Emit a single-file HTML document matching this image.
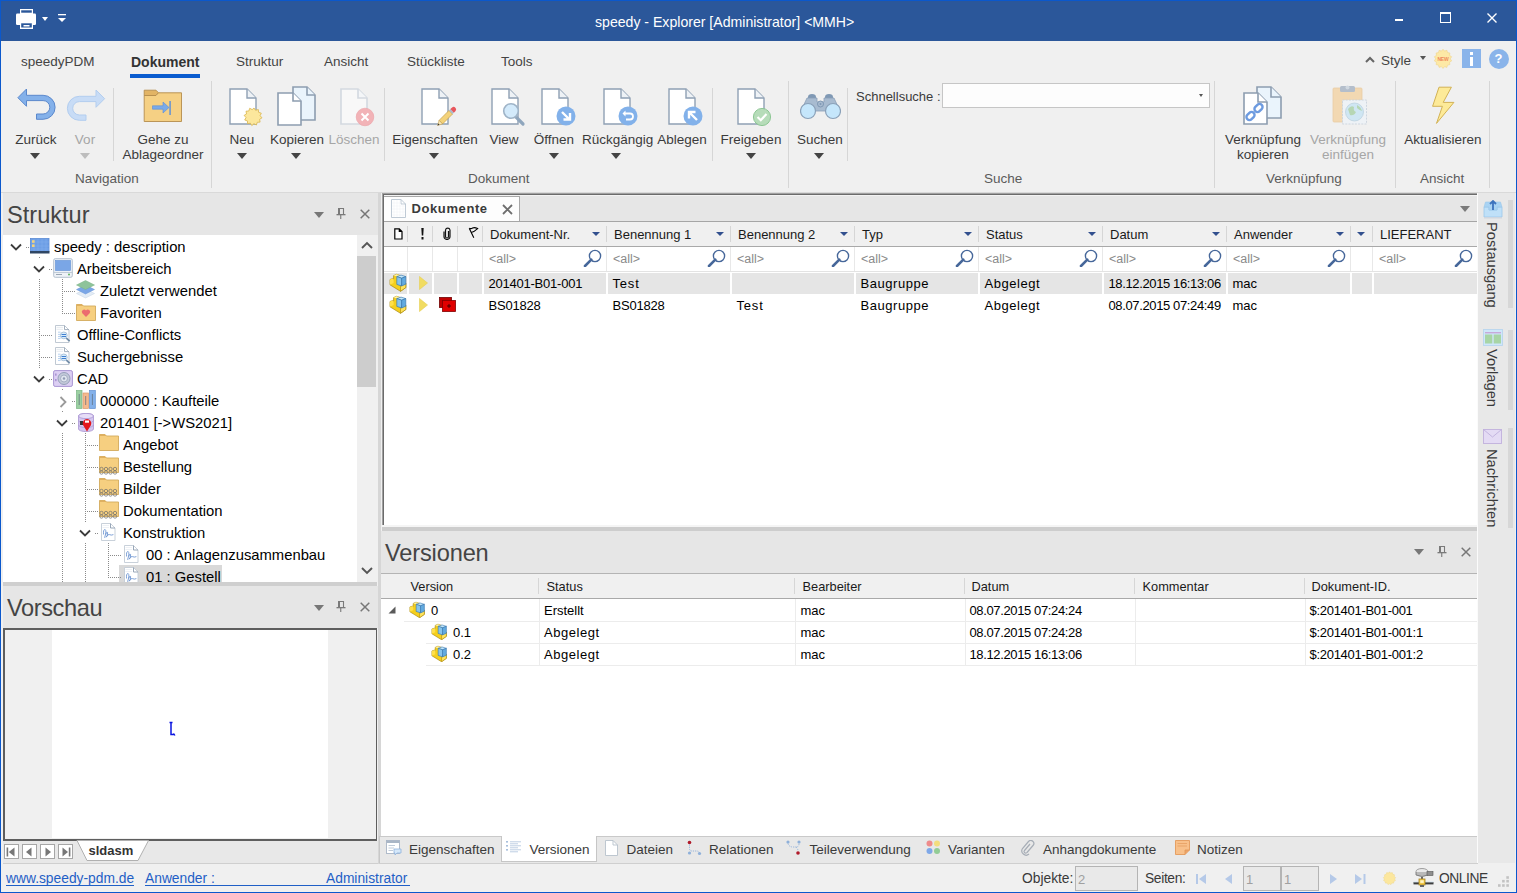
<!DOCTYPE html>
<html><head><meta charset="utf-8">
<style>
*{box-sizing:border-box;margin:0;padding:0}
html,body{width:1517px;height:893px;overflow:hidden;background:#f0f0f0;font-family:"Liberation Sans",sans-serif;color:#333;position:relative}
.a{position:absolute;white-space:nowrap}
.t{position:absolute;white-space:nowrap;line-height:1}
#border{position:absolute;left:0;top:0;width:1517px;height:893px;border:1px solid #0b58cc;pointer-events:none;z-index:50}
#title{position:absolute;left:0;top:0;width:1517px;height:41px;background:#2b579a;z-index:2}
.rl{position:absolute;font-size:13.5px;color:#3b3b3b;text-align:center;line-height:15px;white-space:nowrap}
.rl.dis{color:#a6a6a6}
.dd{position:absolute;width:0;height:0;border-left:5px solid transparent;border-right:5px solid transparent;border-top:6px solid #444}
.dd.dis{border-top-color:#bdbdbd}
.sep{position:absolute;width:1px;background:#d6d6d6}
.gl{position:absolute;font-size:13.5px;color:#5b5b5b;white-space:nowrap;line-height:15px}
.ph{position:absolute;background:#e6e6e6}
.pht{position:absolute;font-size:23.6px;color:#444;line-height:1;white-space:nowrap}
.tr{position:absolute;font-size:14.8px;color:#000;line-height:22px;white-space:nowrap}
.g{position:absolute;font-size:13px;color:#000;line-height:1;white-space:nowrap}
</style></head><body>
<div id="title">
  <!-- printer icon -->
  <svg class="a" style="left:16px;top:8px" width="21" height="22" viewBox="0 0 21 22">
    <rect x="4" y="1" width="13" height="5" fill="#fff"/>
    <rect x="5.2" y="2.3" width="10.6" height="2.4" fill="#2b579a"/>
    <rect x="0" y="5.5" width="20" height="11.5" rx="1.2" fill="#fff"/>
    <rect x="4" y="14.5" width="13" height="6.5" fill="#fff"/>
    <rect x="5.2" y="15.3" width="10.6" height="4.2" fill="#2b579a"/>
    <rect x="7.5" y="17" width="6" height="1.5" fill="#fff"/>
  </svg>
  <div class="dd" style="left:42px;top:17px;border-top-color:#fff;border-left-width:3.5px;border-right-width:3.5px;border-top-width:4px"></div>
  <svg class="a" style="left:58px;top:14px" width="8" height="9" viewBox="0 0 8 9"><rect x="0" y="0" width="8" height="1.3" fill="#fff"/><path d="M0 4 L8 4 L4 8 Z" fill="#fff"/></svg>
  <div class="t" style="left:595px;top:15px;font-size:14.1px;color:#fff">speedy - Explorer [Administrator] &lt;MMH&gt;</div>
  <!-- window controls -->
  <div class="a" style="left:1395px;top:19px;width:8px;height:2px;background:#fff"></div>
  <div class="a" style="left:1440px;top:12px;width:11px;height:11px;border:1.4px solid #fff;border-top-width:2px"></div>
  <svg class="a" style="left:1487px;top:13px" width="10" height="10" viewBox="0 0 10 10"><path d="M0.5 0.5 L9.5 9.5 M9.5 0.5 L0.5 9.5" stroke="#fff" stroke-width="1.4"/></svg>
</div>

<!-- RIBBON -->
<div id="ribbon" class="a" style="left:1px;top:40px;width:1515px;height:153px;background:#f0f0f0;border-bottom:1px solid #d9d9d9"></div>
<div class="t" style="left:21px;top:55px;font-size:13.5px;color:#444">speedyPDM</div>
<div class="t" style="left:131px;top:55px;font-size:14px;font-weight:bold;color:#333">Dokument</div>
<div class="a" style="left:130px;top:74px;width:70px;height:3.6px;background:#0a5ccf"></div>
<div class="t" style="left:236px;top:55px;font-size:13.5px;color:#444">Struktur</div>
<div class="t" style="left:324px;top:55px;font-size:13.5px;color:#444">Ansicht</div>
<div class="t" style="left:407px;top:55px;font-size:13.5px;color:#444">Stückliste</div>
<div class="t" style="left:501px;top:55px;font-size:13.5px;color:#444">Tools</div>


<svg width="0" height="0" style="position:absolute">
 <defs>
  <g id="doc"><path d="M1 1 H18 L27 10 V36 H1 Z" fill="#fff" stroke="#8fa0b4" stroke-width="1.4" stroke-linejoin="miter"/><path d="M18 1 V10 H27" fill="#eef2f6" stroke="#8fa0b4" stroke-width="1.4"/></g>
  <g id="docdis"><path d="M1 1 H18 L27 10 V36 H1 Z" fill="#f8f8f8" stroke="#d3d9e0" stroke-width="1.6"/><path d="M18 1 V10 H27" fill="#f4f6f8" stroke="#d3d9e0" stroke-width="1.6"/></g>
 </defs>
</svg>
<!-- Zurück -->
<svg class="a" style="left:17px;top:88px" width="40" height="34" viewBox="0 0 40 34">
 <path d="M0.9 9.7 L9.5 1 V7.3 H26.1 A12 12 0 0 1 26.1 31.3 H19.5 V26 H26.1 A6.7 6.7 0 0 0 26.1 12.6 H9.5 V18.3 Z" fill="#84b1ea" stroke="#5b88cc" stroke-width="1"/>
</svg>
<div class="rl" style="left:0px;top:132px;width:72px">Zurück</div>
<div class="dd" style="left:30px;top:153px"></div>
<!-- Vor -->
<svg class="a" style="left:66px;top:89px" width="40" height="34" viewBox="0 0 40 34">
 <path d="M38.6 9.7 L30 1 V7.3 H13.4 A12 12 0 0 0 13.4 31.3 H20 V26 H13.4 A6.7 6.7 0 0 1 13.4 12.6 H30 V18.3 Z" fill="#c8dcf6" stroke="#b2cdef" stroke-width="1"/>
</svg>
<div class="rl dis" style="left:65px;top:132px;width:40px">Vor</div>
<div class="dd dis" style="left:80px;top:153px"></div>
<div class="sep" style="left:113px;top:88px;height:73px"></div>
<!-- Gehe zu -->
<svg class="a" style="left:143px;top:89px" width="40" height="34" viewBox="0 0 40 34">
 <path d="M1.2 1.2 H13 L15.5 3.8 L13 6.5 H1.2 Z" fill="#e2b465" stroke="#b48c4c" stroke-width="0.9"/>
 <path d="M1.2 6.5 H13 L15.5 3.8 H38.5 V32.5 H1.2 Z" fill="#f5d084" stroke="#b48c4c" stroke-width="0.9"/>
 <path d="M9.5 16.8 H20 V13 L26 18.5 L20 24 V20.2 H9.5 Z" fill="#7aaae8" stroke="#5b8cd6" stroke-width="0.6"/>
 <rect x="26.2" y="12" width="1.8" height="14" fill="#7a9cc8"/>
</svg>
<div class="rl" style="left:113px;top:132px;width:100px">Gehe zu<br>Ablageordner</div>
<div class="gl" style="left:75px;top:171px">Navigation</div>
<div class="sep" style="left:211px;top:81px;height:107px"></div>
<!-- Neu -->
<svg class="a" style="left:229px;top:88px" width="36" height="40" viewBox="0 0 36 40"><use href="#doc"/>
 <path d="M25 20 l1.6 2.3 2.7-0.8 0.3 2.8 2.7 0.9 -1.2 2.5 1.9 2.1 -2.4 1.5 0.5 2.8 -2.8 0.2 -0.9 2.7 -2.5-1.3 -2.1 1.9 -1.4-2.4 -2.8 0.5 -0.2-2.8 -2.7-0.9 1.3-2.5 -1.9-2.1 2.4-1.4 -0.5-2.8 2.8-0.2 0.9-2.7 2.5 1.3 Z" fill="#fce79c" stroke="#d9b54e" stroke-width="0.8"/>
</svg>
<div class="rl" style="left:222px;top:132px;width:40px">Neu</div>
<div class="dd" style="left:237px;top:153px"></div>
<!-- Kopieren -->
<svg class="a" style="left:277px;top:86px" width="42" height="40" viewBox="0 0 42 40">
 <path d="M16 1 H30 L38 9 V34 H16 Z" fill="#eaf4fc" stroke="#8d9db0" stroke-width="1.6"/><path d="M30 1 V9 H38" fill="#eaf4fc" stroke="#8d9db0" stroke-width="1.6"/>
 <path d="M1 7 H16 L24 15 V39 H1 Z" fill="#fff" stroke="#8d9db0" stroke-width="1.6"/><path d="M16 7 V15 H24" fill="#fff" stroke="#8d9db0" stroke-width="1.6"/>
</svg>
<div class="rl" style="left:267px;top:132px;width:60px">Kopieren</div>
<div class="dd" style="left:291px;top:153px"></div>
<!-- Löschen -->
<svg class="a" style="left:340px;top:88px" width="36" height="40" viewBox="0 0 36 40"><use href="#docdis"/>
 <circle cx="25" cy="29" r="8.8" fill="#f2b3b7" stroke="#eba0a5" stroke-width="0.6"/>
 <path d="M21.5 25.5 L28.5 32.5 M28.5 25.5 L21.5 32.5" stroke="#fff" stroke-width="2"/>
</svg>
<div class="rl dis" style="left:324px;top:132px;width:60px">Löschen</div>
<div class="sep" style="left:384px;top:88px;height:73px"></div>
<!-- Eigenschaften -->
<svg class="a" style="left:421px;top:88px" width="36" height="40" viewBox="0 0 36 40"><use href="#doc"/>
 <path d="M21.6 35.94 L18.06 32.4 L27.96 22.5 L31.5 26.04 Z" fill="#f3d27a" stroke="#c29c48" stroke-width="0.7"/>
 <path d="M18.06 32.4 L21.6 35.94 L16.6 37.4 Z" fill="#f7e6b8" stroke="#c29c48" stroke-width="0.6"/>
 <path d="M17.3 35.4 L18.6 36.7 L16.6 37.4 Z" fill="#333"/>
 <path d="M27.96 22.5 L31.5 26.04 L32.91 24.63 L29.37 21.09 Z" fill="#a9b9cc"/>
 <path d="M29.37 21.09 L32.91 24.63 L34.6 22.9 A2.5 2.5 0 0 0 31.1 19.4 Z" fill="#e8565c"/>
</svg>
<div class="rl" style="left:385px;top:132px;width:100px">Eigenschaften</div>
<div class="dd" style="left:429px;top:153px"></div>
<!-- View -->
<svg class="a" style="left:491px;top:88px" width="36" height="40" viewBox="0 0 36 40"><use href="#doc"/>
 <path d="M24 28 L32 36" stroke="#8fa6bd" stroke-width="3.2" stroke-linecap="round"/>
 <circle cx="20" cy="23" r="7.3" fill="#d3eafb" stroke="#9fb4c8" stroke-width="1.6"/>
</svg>
<div class="rl" style="left:484px;top:132px;width:40px">View</div>
<!-- Öffnen -->
<svg class="a" style="left:541px;top:88px" width="36" height="40" viewBox="0 0 36 40"><use href="#doc"/>
 <circle cx="25" cy="28" r="9.5" fill="#82b1ea"/>
 <path d="M21 24 L28 31 M29 25 V31.5 H22.5" stroke="#fff" stroke-width="2.4" fill="none"/>
</svg>
<div class="rl" style="left:524px;top:132px;width:60px">Öffnen</div>
<div class="dd" style="left:549px;top:153px"></div>
<!-- Rückgängig -->
<svg class="a" style="left:603px;top:88px" width="36" height="40" viewBox="0 0 36 40"><use href="#doc"/>
 <circle cx="25" cy="28" r="9.5" fill="#82b1ea"/>
 <path d="M22 25.5 H27 A3 3 0 0 1 27 31.5 H23" stroke="#fff" stroke-width="1.8" fill="none"/>
 <path d="M19.5 25.5 L22.5 22.5 V28.5 Z" fill="#fff"/>
</svg>
<div class="rl" style="left:582px;top:132px;width:70px">Rückgängig</div>
<div class="dd" style="left:611px;top:153px"></div>
<!-- Ablegen -->
<svg class="a" style="left:668px;top:88px" width="36" height="40" viewBox="0 0 36 40"><use href="#doc"/>
 <circle cx="25" cy="28" r="9.5" fill="#82b1ea"/>
 <path d="M22 25 L29 32 M21 30.5 V24 H27.5" stroke="#fff" stroke-width="2.4" fill="none"/>
</svg>
<div class="rl" style="left:652px;top:132px;width:60px">Ablegen</div>
<div class="sep" style="left:712px;top:88px;height:73px"></div>
<!-- Freigeben -->
<svg class="a" style="left:737px;top:88px" width="36" height="40" viewBox="0 0 36 40"><use href="#doc"/>
 <circle cx="25" cy="29" r="8.6" fill="#b6dcb9" stroke="#86c38d" stroke-width="0.9"/>
 <path d="M20.5 29 L23.8 32.2 L29.5 26" stroke="#fff" stroke-width="2.2" fill="none"/>
</svg>
<div class="rl" style="left:716px;top:132px;width:70px">Freigeben</div>
<div class="dd" style="left:746px;top:153px"></div>
<div class="sep" style="left:788px;top:81px;height:107px"></div>
<div class="gl" style="left:468px;top:171px">Dokument</div>
<!-- Suchen binoculars -->
<svg class="a" style="left:800px;top:92px" width="41" height="28" viewBox="0 0 41 28">
 <path d="M8 5 A4 3 0 0 1 16 5 V7 H8 Z M25 5 A4 3 0 0 1 33 5 V7 H25 Z" fill="#7f98b4"/>
 <path d="M7 6 H17 V10 H24 V6 H34 L40 19 H1 Z" fill="#a8bbd0" stroke="#8aa0b8" stroke-width="0.8"/>
 <circle cx="20.5" cy="12" r="3" fill="#a8bbd0" stroke="#7f98b4" stroke-width="1"/>
 <circle cx="20.5" cy="12" r="1" fill="#7f98b4"/>
 <circle cx="8" cy="19" r="7.5" fill="#c5e6fb" stroke="#8aa0b8" stroke-width="1.2"/>
 <circle cx="33" cy="19" r="7.5" fill="#c5e6fb" stroke="#8aa0b8" stroke-width="1.2"/>
</svg>
<div class="rl" style="left:790px;top:132px;width:60px">Suchen</div>
<div class="dd" style="left:814px;top:153px"></div>
<div class="sep" style="left:847px;top:88px;height:73px"></div>
<!-- Schnellsuche -->
<div class="t" style="left:856px;top:90px;font-size:13px;color:#3b3b3b">Schnellsuche :</div>
<div class="a" style="left:942px;top:83px;width:268px;height:25px;background:#fdfdfd;border:1px solid #c6c6c6"></div>
<div class="dd" style="left:1199px;top:94px;border-left-width:2.5px;border-right-width:2.5px;border-top-width:3px;border-top-color:#555"></div>
<div class="gl" style="left:984px;top:171px">Suche</div>
<div class="sep" style="left:1214px;top:81px;height:107px"></div>
<!-- Verknüpfung kopieren -->
<svg class="a" style="left:1243px;top:86px" width="40" height="40" viewBox="0 0 40 40">
 <path d="M14 1 H28 L38 11 V32 H14 Z" fill="#eaf4fc" stroke="#8d9db0" stroke-width="1.6"/><path d="M28 1 V11 H38" fill="#eaf4fc" stroke="#8d9db0" stroke-width="1.6"/>
 <path d="M1 7 H15 L24 16 V38 H1 Z" fill="#fff" stroke="#8d9db0" stroke-width="1.6"/><path d="M15 7 V16 H24" fill="#fff" stroke="#8d9db0" stroke-width="1.6"/>
 <g fill="none" stroke="#6d9be0" stroke-width="2.4"><rect x="3" y="27" width="9" height="6" rx="3" transform="rotate(-45 7.5 30)"/><rect x="11" y="19" width="9" height="6" rx="3" transform="rotate(-45 15.5 22)"/></g>
</svg>
<div class="rl" style="left:1213px;top:132px;width:100px">Verknüpfung<br>kopieren</div>
<!-- Verknüpfung einfügen (disabled) -->
<svg class="a" style="left:1332px;top:85px" width="38" height="42" viewBox="0 0 38 42">
 <rect x="1" y="3" width="29" height="34" rx="1" fill="#f2d8b2" stroke="#e8cda4" stroke-width="0.8"/>
 <rect x="8" y="1" width="15" height="6" rx="1.5" fill="#b4becb"/>
 <circle cx="15.5" cy="2.5" r="2" fill="#d0d8e0"/>
 <rect x="10.5" y="15" width="24" height="24" fill="#eef2f6" stroke="#c9d2dc" stroke-width="0.9" stroke-dasharray="2 1.2"/>
 <circle cx="22.5" cy="27" r="9" fill="#cfe6f3" stroke="#b7cfdd" stroke-width="0.7"/>
 <path d="M16 24 Q19 20 22 22 Q21 26 24 27 Q22 31 18 30 Z M25 20 Q29 22 30 26 Q27 25 25 23 Z" fill="#b6d6b4"/>
</svg>
<div class="rl dis" style="left:1298px;top:132px;width:100px">Verknüpfung<br>einfügen</div>
<div class="gl" style="left:1266px;top:171px">Verknüpfung</div>
<div class="sep" style="left:1395px;top:81px;height:107px"></div>
<!-- Aktualisieren -->
<svg class="a" style="left:1431px;top:86px" width="25" height="38" viewBox="0 0 25 38">
 <path d="M8 1.2 H20.4 L12.2 16.4 H22.9 L5.5 37.4 L11.4 20.3 H1.6 Z" fill="#fdea98" stroke="#d2b255" stroke-width="1"/>
</svg>
<div class="rl" style="left:1398px;top:132px;width:90px">Aktualisieren</div>
<div class="gl" style="left:1420px;top:171px">Ansicht</div>
<div class="sep" style="left:1489px;top:81px;height:107px"></div>
<!-- Style etc -->
<svg class="a" style="left:1365px;top:56px" width="10" height="7" viewBox="0 0 10 7"><path d="M1 6 L5 2 L9 6" stroke="#666" stroke-width="2" fill="none"/></svg>
<div class="t" style="left:1381px;top:54px;font-size:13.5px;color:#444">Style</div>
<div class="dd" style="left:1420px;top:56px;border-left-width:3px;border-right-width:3px;border-top-width:4px;border-top-color:#555"></div>
<svg class="a" style="left:1433px;top:49px" width="20" height="20" viewBox="0 0 20 20">
 <path d="M10 0.3 L11.6 2.1 L13.9 1.3 L14.5 3.6 L16.9 4 L16.5 6.4 L18.6 7.7 L17.3 9.8 L18.6 11.9 L16.5 13.3 L16.9 15.6 L14.5 16.1 L13.9 18.4 L11.6 17.6 L10 19.4 L8.4 17.6 L6.1 18.4 L5.5 16.1 L3.1 15.6 L3.5 13.3 L1.4 11.9 L2.7 9.8 L1.4 7.7 L3.5 6.4 L3.1 4 L5.5 3.6 L6.1 1.3 L8.4 2.1 Z" fill="#fde9a6" stroke="#f0d488" stroke-width="0.6"/>
 <text x="10" y="11.8" font-family="Liberation Sans" font-size="5" font-weight="bold" fill="#ef8a5a" text-anchor="middle" letter-spacing="-0.2">NEW</text>
</svg>
<div class="a" style="left:1462px;top:49px;width:19px;height:19px;background:#8ab4ea"></div>
<div class="a" style="left:1470px;top:52px;width:3px;height:3px;background:#fff"></div>
<div class="a" style="left:1470px;top:56.5px;width:3px;height:9px;background:#fff"></div>
<div class="a" style="left:1489px;top:49px;width:20px;height:20px;border-radius:50%;background:#8ab4ea"></div>
<div class="t" style="left:1494.5px;top:52px;font-size:13px;font-weight:bold;color:#fff">?</div>


<div class="a" style="left:1px;top:193px;width:377px;height:670px;background:#f0f0f0"></div>
<div class="ph" style="left:3px;top:193px;width:375px;height:42px"></div>
<div class="pht" style="left:7px;top:203.9px">Struktur</div>
<div class="dd" style="left:313.5px;top:211.5px;border-left-width:5.5px;border-right-width:5.5px;border-top-width:6.5px;border-top-color:#777"></div><svg class="a" style="left:336px;top:208px" width="10" height="12" viewBox="0 0 10 12"><path d="M2.5 0.5 H7.5 V6.2 M4.75 7 V11" fill="none" stroke="#7a7a7a" stroke-width="1.1"/><rect x="2" y="0" width="2" height="6.5" fill="#7a7a7a"/><rect x="0.5" y="6" width="9" height="1.3" fill="#7a7a7a"/></svg><svg class="a" style="left:359.5px;top:208.5px" width="10" height="10" viewBox="0 0 10 10"><path d="M0.7 0.7 L9.3 9.3 M9.3 0.7 L0.7 9.3" stroke="#777" stroke-width="1.5"/></svg>
<div class="a" style="left:3px;top:235px;width:354px;height:347px;background:#fff;overflow:hidden" id="tree">
<div class="a" style="left:116px;top:330px;width:103px;height:22px;background:#d9d9d9"></div><div class="a" style="left:36px;top:22px;width:1px;height:1px;background:repeating-linear-gradient(to bottom,#8a8a8a 0 1px,transparent 1px 2px)"></div><div class="a" style="left:36px;top:44px;width:1px;height:89px;background:repeating-linear-gradient(to bottom,#8a8a8a 0 1px,transparent 1px 2px)"></div><div class="a" style="left:23px;top:12px;width:4px;height:1px;background:repeating-linear-gradient(to right,#8a8a8a 0 1px,transparent 1px 2px)"></div><div class="a" style="left:46px;top:34px;width:4px;height:1px;background:repeating-linear-gradient(to right,#8a8a8a 0 1px,transparent 1px 2px)"></div><div class="a" style="left:59px;top:44px;width:1px;height:34px;background:repeating-linear-gradient(to bottom,#8a8a8a 0 1px,transparent 1px 2px)"></div><div class="a" style="left:59px;top:56px;width:14px;height:1px;background:repeating-linear-gradient(to right,#8a8a8a 0 1px,transparent 1px 2px)"></div><div class="a" style="left:59px;top:78px;width:14px;height:1px;background:repeating-linear-gradient(to right,#8a8a8a 0 1px,transparent 1px 2px)"></div><div class="a" style="left:36px;top:100px;width:14px;height:1px;background:repeating-linear-gradient(to right,#8a8a8a 0 1px,transparent 1px 2px)"></div><div class="a" style="left:36px;top:122px;width:14px;height:1px;background:repeating-linear-gradient(to right,#8a8a8a 0 1px,transparent 1px 2px)"></div><div class="a" style="left:46px;top:144px;width:4px;height:1px;background:repeating-linear-gradient(to right,#8a8a8a 0 1px,transparent 1px 2px)"></div><div class="a" style="left:59px;top:154px;width:1px;height:1px;background:repeating-linear-gradient(to bottom,#8a8a8a 0 1px,transparent 1px 2px)"></div><div class="a" style="left:59px;top:176px;width:1px;height:1px;background:repeating-linear-gradient(to bottom,#8a8a8a 0 1px,transparent 1px 2px)"></div><div class="a" style="left:59px;top:198px;width:1px;height:149px;background:repeating-linear-gradient(to bottom,#8a8a8a 0 1px,transparent 1px 2px)"></div><div class="a" style="left:69px;top:166px;width:4px;height:1px;background:repeating-linear-gradient(to right,#8a8a8a 0 1px,transparent 1px 2px)"></div><div class="a" style="left:69px;top:188px;width:4px;height:1px;background:repeating-linear-gradient(to right,#8a8a8a 0 1px,transparent 1px 2px)"></div><div class="a" style="left:82px;top:198px;width:1px;height:90px;background:repeating-linear-gradient(to bottom,#8a8a8a 0 1px,transparent 1px 2px)"></div><div class="a" style="left:82px;top:210px;width:14px;height:1px;background:repeating-linear-gradient(to right,#8a8a8a 0 1px,transparent 1px 2px)"></div><div class="a" style="left:82px;top:232px;width:14px;height:1px;background:repeating-linear-gradient(to right,#8a8a8a 0 1px,transparent 1px 2px)"></div><div class="a" style="left:82px;top:254px;width:14px;height:1px;background:repeating-linear-gradient(to right,#8a8a8a 0 1px,transparent 1px 2px)"></div><div class="a" style="left:82px;top:276px;width:14px;height:1px;background:repeating-linear-gradient(to right,#8a8a8a 0 1px,transparent 1px 2px)"></div><div class="a" style="left:92px;top:298px;width:4px;height:1px;background:repeating-linear-gradient(to right,#8a8a8a 0 1px,transparent 1px 2px)"></div><div class="a" style="left:82px;top:308px;width:1px;height:39px;background:repeating-linear-gradient(to bottom,#8a8a8a 0 1px,transparent 1px 2px)"></div><div class="a" style="left:105px;top:308px;width:1px;height:34px;background:repeating-linear-gradient(to bottom,#8a8a8a 0 1px,transparent 1px 2px)"></div><div class="a" style="left:105px;top:320px;width:14px;height:1px;background:repeating-linear-gradient(to right,#8a8a8a 0 1px,transparent 1px 2px)"></div><div class="a" style="left:105px;top:342px;width:14px;height:1px;background:repeating-linear-gradient(to right,#8a8a8a 0 1px,transparent 1px 2px)"></div><svg class="a" style="left:6.5px;top:8px" width="12" height="8" viewBox="0 0 12 8"><path d="M1 1.5 L6 6.5 L11 1.5" fill="none" stroke="#3c3c3c" stroke-width="1.8"/></svg><div class="a" style="left:27px;top:3px;line-height:0"><svg width="20" height="16" viewBox="0 0 20 16"><rect x="0.5" y="0.5" width="18.5" height="13" fill="#6e9fe6" stroke="#5a8ad4" stroke-width="0.8"/><path d="M4 1 V13 M8 1 V13 M12 1 V13 M16 1 V13 M1 4 H19 M1 8 H19 M1 11 H19" stroke="#86b0ec" stroke-width="0.5"/><rect x="0" y="13" width="19.5" height="2.5" fill="#2f4664"/><rect x="2" y="2.2" width="2.6" height="2.6" fill="#f4d37c"/><rect x="2" y="6.4" width="2.6" height="2.6" fill="#f4d37c"/></svg></div><div class="tr" style="left:51px;top:0.8000000000000114px">speedy : description</div><svg class="a" style="left:29.5px;top:30px" width="12" height="8" viewBox="0 0 12 8"><path d="M1 1.5 L6 6.5 L11 1.5" fill="none" stroke="#3c3c3c" stroke-width="1.8"/></svg><div class="a" style="left:50px;top:23px;line-height:0"><svg width="20" height="20" viewBox="0 0 20 20"><rect x="0.7" y="0.7" width="18.6" height="18.6" rx="1.5" fill="#eef2f7" stroke="#b5c1cf" stroke-width="1"/><rect x="2.5" y="2.5" width="15" height="10" fill="#7aa6e6" stroke="#5e8ed6" stroke-width="0.6"/><path d="M0.7 14.5 H19.3" stroke="#b5c1cf" stroke-width="0.8"/><rect x="3" y="16" width="6" height="1" fill="#9aa6b4"/><circle cx="16" cy="16.6" r="1" fill="#5bb05f"/></svg></div><div class="tr" style="left:74px;top:22.80000000000001px">Arbeitsbereich</div><div class="a" style="left:73px;top:45px;line-height:0"><svg width="19" height="19" viewBox="0 0 19 19"><path d="M9.5 9 L18.5 13.5 L9.5 18 L0.5 13.5 Z" fill="#e3ecf6" stroke="#cfdae8" stroke-width="0.6"/><path d="M9.5 5 L18.5 9.5 L9.5 14 L0.5 9.5 Z" fill="#7aa6e6" stroke="#6b96d8" stroke-width="0.5"/><path d="M9.5 0.5 L18.5 5 L9.5 9.5 L0.5 5 Z" fill="#8ec39a" stroke="#7ab387" stroke-width="0.5"/></svg></div><div class="tr" style="left:97px;top:44.80000000000001px">Zuletzt verwendet</div><div class="a" style="left:73px;top:69px;line-height:0"><svg width="20" height="17" viewBox="0 0 20 17"><path d="M0.5 0.5 H6 L7.5 2 H19.5 V16.5 H0.5 Z" fill="#f6cf80" stroke="#d2aa5c" stroke-width="0.9"/><path d="M0.5 0.5 H6 L7.5 2 H0.5 Z" fill="#dfb060"/><path d="M10 13 L6.3 9.3 A2.1 2.1 0 0 1 10 6.6 A2.1 2.1 0 0 1 13.7 9.3 Z" fill="#ec6b6f"/></svg></div><div class="tr" style="left:97px;top:66.80000000000001px">Favoriten</div><div class="a" style="left:52px;top:90px;line-height:0"><svg width="16" height="19" viewBox="0 0 16 19"><path d="M0.5 0.5 H9.5 L14 5 V17.5 H0.5 Z" fill="#fff" stroke="#b9c3ce" stroke-width="0.9"/><path d="M9.5 0.5 V4.6 H14" fill="none" stroke="#9aa8b8" stroke-width="0.9"/><path d="M1.5 2.4 H8 M1.5 4.3 H8" stroke="#dde3ea" stroke-width="0.7"/><path d="M3 7.2 H5.7 M3 9.4 H5.7 M3 11.5 H5.7 M3 13.4 H5.7" stroke="#a6c6ec" stroke-width="0.8"/><path d="M11.1 12.9 L14.6 16.1" stroke="#6f8aa6" stroke-width="1.7"/><circle cx="8.8" cy="10.4" r="3.4" fill="#d8ecfb" stroke="#9db8d2" stroke-width="0.8"/><path d="M6.6 9.5 H11 M6.6 11.5 H11" stroke="#3f7fd0" stroke-width="1.1"/></svg></div><div class="tr" style="left:74px;top:88.80000000000001px">Offline-Conflicts</div><div class="a" style="left:52px;top:112px;line-height:0"><svg width="16" height="19" viewBox="0 0 16 19"><path d="M0.5 0.5 H9.5 L14 5 V17.5 H0.5 Z" fill="#fff" stroke="#b9c3ce" stroke-width="0.9"/><path d="M9.5 0.5 V4.6 H14" fill="none" stroke="#9aa8b8" stroke-width="0.9"/><path d="M1.5 2.4 H8 M1.5 4.3 H8" stroke="#dde3ea" stroke-width="0.7"/><path d="M3 7.2 H5.7 M3 9.4 H5.7 M3 11.5 H5.7 M3 13.4 H5.7" stroke="#a6c6ec" stroke-width="0.8"/><path d="M11.1 12.9 L14.6 16.1" stroke="#6f8aa6" stroke-width="1.7"/><circle cx="8.8" cy="10.4" r="3.4" fill="#d8ecfb" stroke="#9db8d2" stroke-width="0.8"/><path d="M6.6 9.5 H11 M6.6 11.5 H11" stroke="#3f7fd0" stroke-width="1.1"/></svg></div><div class="tr" style="left:74px;top:110.80000000000001px">Suchergebnisse</div><svg class="a" style="left:29.5px;top:140px" width="12" height="8" viewBox="0 0 12 8"><path d="M1 1.5 L6 6.5 L11 1.5" fill="none" stroke="#3c3c3c" stroke-width="1.8"/></svg><div class="a" style="left:50px;top:135px;line-height:0"><svg width="20" height="17" viewBox="0 0 20 17"><rect x="0.6" y="0.6" width="18.8" height="15.8" rx="1.5" fill="#dccff3" stroke="#a995d3" stroke-width="1"/><rect x="2" y="3.5" width="1.6" height="2.2" fill="#a995d3"/><rect x="2" y="9" width="1.6" height="2.2" fill="#a995d3"/><circle cx="11" cy="8.5" r="6" fill="#c3c9d9" stroke="#8f9ab4" stroke-width="0.9"/><circle cx="11" cy="8.5" r="3.5" fill="#dfe4ee" stroke="#9aa5bd" stroke-width="0.8"/><circle cx="11" cy="8.5" r="1.2" fill="#8f9ab4"/></svg></div><div class="tr" style="left:74px;top:132.8px">CAD</div><svg class="a" style="left:55.5px;top:160.5px" width="8" height="12" viewBox="0 0 8 12"><path d="M1.5 1 L6.5 6 L1.5 11" fill="none" stroke="#9a9a9a" stroke-width="1.8"/></svg><div class="a" style="left:73px;top:155px;line-height:0"><svg width="20" height="19" viewBox="0 0 20 19"><rect x="0.5" y="0.5" width="5.5" height="18" fill="#9cd0a2" stroke="#79b583" stroke-width="0.7"/><rect x="7" y="3" width="5.5" height="15.5" fill="#f6b98e" stroke="#d99a6c" stroke-width="0.7"/><rect x="13.5" y="0.5" width="5.8" height="18" fill="#84b1ea" stroke="#5f8fd2" stroke-width="0.7"/><path d="M3.2 4 V15 M9.7 6 V15 M16.4 4 V15" stroke="#5d6b78" stroke-width="0.7"/></svg></div><div class="tr" style="left:97px;top:154.8px">000000 : Kaufteile</div><svg class="a" style="left:52.5px;top:184px" width="12" height="8" viewBox="0 0 12 8"><path d="M1 1.5 L6 6.5 L11 1.5" fill="none" stroke="#3c3c3c" stroke-width="1.8"/></svg><div class="a" style="left:75px;top:178px;line-height:0"><svg width="16" height="19" viewBox="0 0 16 19"><path d="M0.5 3 A7.5 2.6 0 0 1 15.5 3 V16 A7.5 2.6 0 0 1 0.5 16 Z" fill="#d3c6ef" stroke="#a996d2" stroke-width="0.8"/><ellipse cx="8" cy="3" rx="7.5" ry="2.6" fill="#e6ddf8" stroke="#a996d2" stroke-width="0.8"/><path d="M0.5 7.5 A7.5 2.6 0 0 0 15.5 7.5 M0.5 12 A7.5 2.6 0 0 0 15.5 12" fill="none" stroke="#a996d2" stroke-width="0.7"/><rect x="2" y="8" width="3" height="4" fill="#333"/><path d="M9 18.5 L5 12 A4.3 4.3 0 1 1 13 12 Z" fill="#e3151b"/><rect x="7" y="7.5" width="4" height="2.2" fill="#fff"/></svg></div><div class="tr" style="left:97px;top:176.8px">201401 [-&gt;WS2021]</div><div class="a" style="left:96px;top:199px;line-height:0"><svg width="20" height="17" viewBox="0 0 20 17"><path d="M0.5 0.5 H6 L7.5 2 H19.5 V16.5 H0.5 Z" fill="#f6cf80" stroke="#d2aa5c" stroke-width="0.9"/><path d="M0.5 0.5 H6 L7.5 2 H0.5 Z" fill="#dfb060"/></svg></div><div class="tr" style="left:120px;top:198.8px">Angebot</div><div class="a" style="left:96px;top:221px;line-height:0"><svg width="20" height="19" viewBox="0 0 20 19"><path d="M0.5 0.5 H6 L7.5 2 H19.5 V16.5 H0.5 Z" fill="#f6cf80" stroke="#d2aa5c" stroke-width="0.9"/><path d="M0.5 0.5 H6 L7.5 2 H0.5 Z" fill="#dfb060"/><g fill="none" stroke="#6c6c6c" stroke-width="0.7"><circle cx="2.5" cy="13" r="1.7"/><circle cx="7" cy="13" r="1.7"/><circle cx="11.5" cy="13" r="1.7"/><circle cx="16" cy="13" r="1.7"/><circle cx="2.5" cy="16.5" r="1.7"/><circle cx="7" cy="16.5" r="1.7"/><circle cx="11.5" cy="16.5" r="1.7"/><circle cx="16" cy="16.5" r="1.7"/></g></svg></div><div class="tr" style="left:120px;top:220.8px">Bestellung</div><div class="a" style="left:96px;top:243px;line-height:0"><svg width="20" height="19" viewBox="0 0 20 19"><path d="M0.5 0.5 H6 L7.5 2 H19.5 V16.5 H0.5 Z" fill="#f6cf80" stroke="#d2aa5c" stroke-width="0.9"/><path d="M0.5 0.5 H6 L7.5 2 H0.5 Z" fill="#dfb060"/><g fill="none" stroke="#6c6c6c" stroke-width="0.7"><circle cx="2.5" cy="13" r="1.7"/><circle cx="7" cy="13" r="1.7"/><circle cx="11.5" cy="13" r="1.7"/><circle cx="16" cy="13" r="1.7"/><circle cx="2.5" cy="16.5" r="1.7"/><circle cx="7" cy="16.5" r="1.7"/><circle cx="11.5" cy="16.5" r="1.7"/><circle cx="16" cy="16.5" r="1.7"/></g></svg></div><div class="tr" style="left:120px;top:242.8px">Bilder</div><div class="a" style="left:96px;top:265px;line-height:0"><svg width="20" height="19" viewBox="0 0 20 19"><path d="M0.5 0.5 H6 L7.5 2 H19.5 V16.5 H0.5 Z" fill="#f6cf80" stroke="#d2aa5c" stroke-width="0.9"/><path d="M0.5 0.5 H6 L7.5 2 H0.5 Z" fill="#dfb060"/><g fill="none" stroke="#6c6c6c" stroke-width="0.7"><circle cx="2.5" cy="13" r="1.7"/><circle cx="7" cy="13" r="1.7"/><circle cx="11.5" cy="13" r="1.7"/><circle cx="16" cy="13" r="1.7"/><circle cx="2.5" cy="16.5" r="1.7"/><circle cx="7" cy="16.5" r="1.7"/><circle cx="11.5" cy="16.5" r="1.7"/><circle cx="16" cy="16.5" r="1.7"/></g></svg></div><div class="tr" style="left:120px;top:264.8px">Dokumentation</div><svg class="a" style="left:75.5px;top:294px" width="12" height="8" viewBox="0 0 12 8"><path d="M1 1.5 L6 6.5 L11 1.5" fill="none" stroke="#3c3c3c" stroke-width="1.8"/></svg><div class="a" style="left:98px;top:287px;line-height:0"><svg width="16" height="19" viewBox="0 0 16 19"><path d="M0.5 1.5 H9.5 L14 6 V18.5 H0.5 Z" fill="#fff" stroke="#c3ccd6" stroke-width="0.9"/><path d="M9.5 1.5 V6 H14" fill="none" stroke="#8d9db0" stroke-width="0.9"/><path d="M1.5 3.5 H8 M1.5 5.5 H8" stroke="#e3e8ee" stroke-width="0.6"/><path d="M2.6 12.5 Q2 7.2 4.2 7.6 Q5.8 8.6 3.6 15.8 M4.6 12.8 Q5.6 9.2 6.6 10.4 Q6.8 13.6 5.2 15.2 Q7 11.6 8.6 12.6 Q10 13.6 12.4 12.6" fill="none" stroke="#7197d2" stroke-width="0.9"/></svg></div><div class="tr" style="left:120px;top:286.79999999999995px">Konstruktion</div><div class="a" style="left:121px;top:309px;line-height:0"><svg width="16" height="19" viewBox="0 0 16 19"><path d="M0.5 1.5 H9.5 L14 6 V18.5 H0.5 Z" fill="#fff" stroke="#c3ccd6" stroke-width="0.9"/><path d="M9.5 1.5 V6 H14" fill="none" stroke="#8d9db0" stroke-width="0.9"/><path d="M1.5 3.5 H8 M1.5 5.5 H8" stroke="#e3e8ee" stroke-width="0.6"/><path d="M2.6 12.5 Q2 7.2 4.2 7.6 Q5.8 8.6 3.6 15.8 M4.6 12.8 Q5.6 9.2 6.6 10.4 Q6.8 13.6 5.2 15.2 Q7 11.6 8.6 12.6 Q10 13.6 12.4 12.6" fill="none" stroke="#7197d2" stroke-width="0.9"/></svg></div><div class="tr" style="left:143px;top:308.79999999999995px">00 : Anlagenzusammenbau</div><div class="a" style="left:121px;top:331px;line-height:0"><svg width="16" height="19" viewBox="0 0 16 19"><path d="M0.5 1.5 H9.5 L14 6 V18.5 H0.5 Z" fill="#fff" stroke="#c3ccd6" stroke-width="0.9"/><path d="M9.5 1.5 V6 H14" fill="none" stroke="#8d9db0" stroke-width="0.9"/><path d="M1.5 3.5 H8 M1.5 5.5 H8" stroke="#e3e8ee" stroke-width="0.6"/><path d="M2.6 12.5 Q2 7.2 4.2 7.6 Q5.8 8.6 3.6 15.8 M4.6 12.8 Q5.6 9.2 6.6 10.4 Q6.8 13.6 5.2 15.2 Q7 11.6 8.6 12.6 Q10 13.6 12.4 12.6" fill="none" stroke="#7197d2" stroke-width="0.9"/></svg></div><div class="tr" style="left:143px;top:330.79999999999995px">01 : Gestell</div>
</div>
<div class="a" style="left:357px;top:235px;width:20px;height:347px;background:#f0f0f0"></div>
<div class="a" style="left:357px;top:256px;width:19px;height:131px;background:#cdcdcd"></div>
<svg class="a" style="left:361px;top:240.5px" width="12" height="8" viewBox="0 0 12 8"><path d="M1 7 L6 2 L11 7" fill="none" stroke="#555" stroke-width="1.9"/></svg>
<svg class="a" style="left:361px;top:566.5px" width="12" height="8" viewBox="0 0 12 8"><path d="M1 1 L6 6 L11 1" fill="none" stroke="#555" stroke-width="1.9"/></svg>
<div class="a" style="left:3px;top:582px;width:374px;height:4px;background:#cfcfcf"></div>
<div class="ph" style="left:3px;top:586px;width:375px;height:42px"></div>
<div class="pht" style="left:7px;top:596.5px;letter-spacing:-0.4px">Vorschau</div>
<div class="dd" style="left:313.5px;top:604.5px;border-left-width:5.5px;border-right-width:5.5px;border-top-width:6.5px;border-top-color:#777"></div><svg class="a" style="left:336px;top:601px" width="10" height="12" viewBox="0 0 10 12"><path d="M2.5 0.5 H7.5 V6.2 M4.75 7 V11" fill="none" stroke="#7a7a7a" stroke-width="1.1"/><rect x="2" y="0" width="2" height="6.5" fill="#7a7a7a"/><rect x="0.5" y="6" width="9" height="1.3" fill="#7a7a7a"/></svg><svg class="a" style="left:359.5px;top:601.5px" width="10" height="10" viewBox="0 0 10 10"><path d="M0.7 0.7 L9.3 9.3 M9.3 0.7 L0.7 9.3" stroke="#777" stroke-width="1.5"/></svg>
<div class="a" style="left:3px;top:628px;width:374px;height:213px;border:2px solid #5e5e5e;border-right-width:1px;background:#f0f0f0"></div>
<div class="a" style="left:52px;top:630px;width:276px;height:208px;background:#fff"></div>
<svg class="a" style="left:168px;top:721px" width="9" height="16" viewBox="0 0 9 16"><path d="M1.5 1.5 H4.5 M3 1 V13.5 H6.5" stroke="#0a14e0" stroke-width="1.5" fill="none"/><path d="M5.5 12.5 L7 14.5" stroke="#0a14e0" stroke-width="1.2"/></svg>
<div class="a" style="left:3px;top:841px;width:375px;height:23px;background:#e8e8e8;border-bottom:1px solid #cfcfcf"></div>
<div class="a" style="left:4px;top:844px;width:15px;height:15px;background:#fff;border:1px solid #a6a6a6"></div><svg class="a" style="left:4px;top:844.5px" width="15" height="14" viewBox="0 0 15 14"><rect x="2.6" y="2.5" width="1.6" height="9" fill="#777"/><path d="M4.8 7 L10.5 2.5 V11.5 Z" fill="#777"/></svg><div class="a" style="left:22px;top:844px;width:15px;height:15px;background:#fff;border:1px solid #a6a6a6"></div><svg class="a" style="left:22px;top:844.5px" width="15" height="14" viewBox="0 0 15 14"><path d="M4 7 L9.5 2.5 V11.5 Z" fill="#777"/></svg><div class="a" style="left:40px;top:844px;width:15px;height:15px;background:#fff;border:1px solid #a6a6a6"></div><svg class="a" style="left:40px;top:844.5px" width="15" height="14" viewBox="0 0 15 14"><path d="M11 7 L5.5 2.5 V11.5 Z" fill="#777"/></svg><div class="a" style="left:58px;top:844px;width:15px;height:15px;background:#fff;border:1px solid #a6a6a6"></div><svg class="a" style="left:58px;top:844.5px" width="15" height="14" viewBox="0 0 15 14"><path d="M10 7 L4.5 2.5 V11.5 Z" fill="#777"/><rect x="10.8" y="2.5" width="1.6" height="9" fill="#777"/></svg>
<svg class="a" style="left:76px;top:840px" width="74" height="22" viewBox="0 0 74 22"><path d="M1 0.5 H72.5 L62 20.5 H11 Z" fill="#fff" stroke="#b0b0b0" stroke-width="1"/></svg>
<div class="t" style="left:88.5px;top:843.5px;font-size:13px;font-weight:bold;color:#333">sldasm</div>
<div class="a" style="left:378px;top:193px;width:3px;height:671px;background:#d6d6d6"></div>
<div class="a" style="left:1px;top:864px;width:1515px;height:28px;background:#f0f0f0"></div>
<div class="t" style="left:6px;top:871.8px;font-size:13.8px;color:#1f5fc6">www.speedy-pdm.de</div>
<div class="a" style="left:6px;top:885px;width:128px;height:1px;background:#1f5fc6"></div>
<div class="t" style="left:145px;top:871.8px;font-size:13.8px;color:#1f5fc6">Anwender :</div>
<div class="t" style="left:326px;top:871.8px;font-size:13.8px;color:#1f5fc6">Administrator</div>
<div class="a" style="left:145px;top:885px;width:265px;height:1px;background:#1f5fc6"></div><div class="a" style="left:382px;top:193px;width:1096px;height:334px;background:#fff;border-top:2px solid #6b6b6b;border-left:2px solid #6b6b6b;border-right:1px solid #f7f7f7;border-bottom:1px solid #f7f7f7"></div>
<div class="a" style="left:382px;top:193px;width:1095px;height:1px;background:#a0a0a0"></div>
<div class="a" style="left:382px;top:193px;width:1px;height:333px;background:#a0a0a0"></div>
<div class="a" style="left:384px;top:195px;width:1093px;height:1px;background:#f3f3f3"></div><div class="a" style="left:384px;top:196px;width:1093px;height:26px;background:#e6e6e6;border-bottom:1px solid #a6a6a6"></div>
<div class="a" style="left:384px;top:196px;width:136px;height:25px;background:#fdfdfd;border-right:1px solid #a8a8a8;border-top:1px solid #a8a8a8"></div>
<svg class="a" style="left:391px;top:199px" width="15" height="19" viewBox="0 0 15 19"><path d="M0.5 0.5 H10 L14.5 5 V18.5 H0.5 Z" fill="#fff" stroke="#b8c4d0" stroke-width="0.9"/><path d="M10 0.5 V5 H14.5" fill="none" stroke="#b8c4d0" stroke-width="0.9"/><path d="M3 1 V18 M6 1 V18 M9 1 V18 M12 5 V18 M1 4 H10 M1 7 H14 M1 10 H14 M1 13 H14 M1 16 H14" stroke="#eef2f6" stroke-width="0.5"/></svg>
<div class="t" style="left:411.5px;top:202.3px;font-size:13px;font-weight:bold;color:#3a3a3a;letter-spacing:0.6px">Dokumente</div>
<svg class="a" style="left:502px;top:204px" width="11" height="11" viewBox="0 0 11 11"><path d="M1 1 L10 10 M10 1 L1 10" stroke="#6e6e6e" stroke-width="1.8"/></svg>
<div class="dd" style="left:1460px;top:206px;border-left-width:5px;border-right-width:5px;border-top-width:6px;border-top-color:#7a7a7a"></div>
<div class="a" style="left:384px;top:222px;width:1093px;height:25px;background:#f0f0f0;border-bottom:1px solid #a9a9a9"></div>
<div class="a" style="left:407px;top:226px;width:1px;height:16px;background:#d6d6d6"></div>
<div class="a" style="left:432px;top:226px;width:1px;height:16px;background:#d6d6d6"></div>
<div class="a" style="left:457px;top:226px;width:1px;height:16px;background:#d6d6d6"></div>
<div class="a" style="left:482px;top:226px;width:1px;height:16px;background:#d6d6d6"></div>
<div class="a" style="left:606px;top:226px;width:1px;height:16px;background:#d6d6d6"></div>
<div class="a" style="left:730px;top:226px;width:1px;height:16px;background:#d6d6d6"></div>
<div class="a" style="left:854px;top:226px;width:1px;height:16px;background:#d6d6d6"></div>
<div class="a" style="left:978px;top:226px;width:1px;height:16px;background:#d6d6d6"></div>
<div class="a" style="left:1102px;top:226px;width:1px;height:16px;background:#d6d6d6"></div>
<div class="a" style="left:1226px;top:226px;width:1px;height:16px;background:#d6d6d6"></div>
<div class="a" style="left:1350px;top:226px;width:1px;height:16px;background:#d6d6d6"></div>
<div class="a" style="left:1372px;top:226px;width:1px;height:16px;background:#d6d6d6"></div>
<svg class="a" style="left:393.5px;top:227.5px" width="10" height="12" viewBox="0 0 10 12"><path d="M0.8 0.8 H5.3 L8 3.5 V11 H0.8 Z M5.3 0.8 V3.5 H8" fill="#fff" stroke="#000" stroke-width="1.2"/></svg>
<svg class="a" style="left:420px;top:227px" width="5" height="13" viewBox="0 0 5 13"><path d="M1.3 1 H3.7 L3.2 8.5 H1.8 Z" fill="#111"/><rect x="1.5" y="10" width="2" height="2.5" fill="#111"/></svg>
<svg class="a" style="left:443px;top:227px" width="8" height="13" viewBox="0 0 8 13"><path d="M5.5 4 V9.5 A1.5 1.5 0 0 1 2.5 9.5 V3 A2.3 2.3 0 0 1 7 3 V9.5 A3 3 0 0 1 1 9.5 V4.5" fill="none" stroke="#111" stroke-width="1.2"/></svg>
<svg class="a" style="left:468px;top:227px" width="12" height="12" viewBox="0 0 12 12"><path d="M1.2 1.2 L5.8 10.8 M1.2 1.2 Q3 2.2 4.6 1 Q6.5 0 9.6 1.6 L5.8 4.6 Q4.2 5.4 3 5.2" fill="none" stroke="#000" stroke-width="1.1"/></svg>
<div class="t" style="left:490.0px;top:227.6px;font-size:13px;color:#1a1a1a">Dokument-Nr.</div>
<div class="dd" style="left:592.0px;top:232px;border-left-width:4px;border-right-width:4px;border-top-width:4.5px;border-top-color:#32508e"></div>
<div class="t" style="left:614.0px;top:227.6px;font-size:13px;color:#1a1a1a">Benennung 1</div>
<div class="dd" style="left:716.0px;top:232px;border-left-width:4px;border-right-width:4px;border-top-width:4.5px;border-top-color:#32508e"></div>
<div class="t" style="left:738.0px;top:227.6px;font-size:13px;color:#1a1a1a">Benennung 2</div>
<div class="dd" style="left:840.0px;top:232px;border-left-width:4px;border-right-width:4px;border-top-width:4.5px;border-top-color:#32508e"></div>
<div class="t" style="left:862.0px;top:227.6px;font-size:13px;color:#1a1a1a">Typ</div>
<div class="dd" style="left:964.0px;top:232px;border-left-width:4px;border-right-width:4px;border-top-width:4.5px;border-top-color:#32508e"></div>
<div class="t" style="left:986.0px;top:227.6px;font-size:13px;color:#1a1a1a">Status</div>
<div class="dd" style="left:1088.0px;top:232px;border-left-width:4px;border-right-width:4px;border-top-width:4.5px;border-top-color:#32508e"></div>
<div class="t" style="left:1110.0px;top:227.6px;font-size:13px;color:#1a1a1a">Datum</div>
<div class="dd" style="left:1212.0px;top:232px;border-left-width:4px;border-right-width:4px;border-top-width:4.5px;border-top-color:#32508e"></div>
<div class="t" style="left:1234.0px;top:227.6px;font-size:13px;color:#1a1a1a">Anwender</div>
<div class="dd" style="left:1336.0px;top:232px;border-left-width:4px;border-right-width:4px;border-top-width:4.5px;border-top-color:#32508e"></div>
<div class="dd" style="left:1357px;top:232px;border-left-width:4px;border-right-width:4px;border-top-width:4.5px;border-top-color:#32508e"></div>
<div class="t" style="left:1380px;top:227.6px;font-size:13px;color:#1a1a1a">LIEFERANT</div>
<div class="a" style="left:384px;top:247px;width:1093px;height:25px;background:#fff;border-bottom:1px solid #e3e3e3"></div>
<div class="a" style="left:407px;top:247px;width:1px;height:24px;background:#e8e8e8"></div>
<div class="a" style="left:432px;top:247px;width:1px;height:24px;background:#e8e8e8"></div>
<div class="a" style="left:457px;top:247px;width:1px;height:24px;background:#e8e8e8"></div>
<div class="a" style="left:482px;top:247px;width:1px;height:24px;background:#e8e8e8"></div>
<div class="a" style="left:606px;top:247px;width:1px;height:24px;background:#e8e8e8"></div>
<div class="a" style="left:730px;top:247px;width:1px;height:24px;background:#e8e8e8"></div>
<div class="a" style="left:854px;top:247px;width:1px;height:24px;background:#e8e8e8"></div>
<div class="a" style="left:978px;top:247px;width:1px;height:24px;background:#e8e8e8"></div>
<div class="a" style="left:1102px;top:247px;width:1px;height:24px;background:#e8e8e8"></div>
<div class="a" style="left:1226px;top:247px;width:1px;height:24px;background:#e8e8e8"></div>
<div class="a" style="left:1350px;top:247px;width:1px;height:24px;background:#e8e8e8"></div>
<div class="a" style="left:1372px;top:247px;width:1px;height:24px;background:#e8e8e8"></div>
<div class="t" style="left:489.0px;top:252.8px;font-size:12.5px;color:#8a8a8a">&lt;all&gt;</div>
<svg class="a" style="left:583px;top:248px" width="19" height="19" viewBox="0 0 19 19"><path d="M8.3 11.7 L2 18" stroke="#46679a" stroke-width="2.6" stroke-linecap="round"/><circle cx="12" cy="8" r="5.6" fill="none" stroke="#46679a" stroke-width="1.4"/></svg>
<div class="t" style="left:613.0px;top:252.8px;font-size:12.5px;color:#8a8a8a">&lt;all&gt;</div>
<svg class="a" style="left:707px;top:248px" width="19" height="19" viewBox="0 0 19 19"><path d="M8.3 11.7 L2 18" stroke="#46679a" stroke-width="2.6" stroke-linecap="round"/><circle cx="12" cy="8" r="5.6" fill="none" stroke="#46679a" stroke-width="1.4"/></svg>
<div class="t" style="left:737.0px;top:252.8px;font-size:12.5px;color:#8a8a8a">&lt;all&gt;</div>
<svg class="a" style="left:831px;top:248px" width="19" height="19" viewBox="0 0 19 19"><path d="M8.3 11.7 L2 18" stroke="#46679a" stroke-width="2.6" stroke-linecap="round"/><circle cx="12" cy="8" r="5.6" fill="none" stroke="#46679a" stroke-width="1.4"/></svg>
<div class="t" style="left:861.0px;top:252.8px;font-size:12.5px;color:#8a8a8a">&lt;all&gt;</div>
<svg class="a" style="left:955px;top:248px" width="19" height="19" viewBox="0 0 19 19"><path d="M8.3 11.7 L2 18" stroke="#46679a" stroke-width="2.6" stroke-linecap="round"/><circle cx="12" cy="8" r="5.6" fill="none" stroke="#46679a" stroke-width="1.4"/></svg>
<div class="t" style="left:985.0px;top:252.8px;font-size:12.5px;color:#8a8a8a">&lt;all&gt;</div>
<svg class="a" style="left:1079px;top:248px" width="19" height="19" viewBox="0 0 19 19"><path d="M8.3 11.7 L2 18" stroke="#46679a" stroke-width="2.6" stroke-linecap="round"/><circle cx="12" cy="8" r="5.6" fill="none" stroke="#46679a" stroke-width="1.4"/></svg>
<div class="t" style="left:1109.0px;top:252.8px;font-size:12.5px;color:#8a8a8a">&lt;all&gt;</div>
<svg class="a" style="left:1203px;top:248px" width="19" height="19" viewBox="0 0 19 19"><path d="M8.3 11.7 L2 18" stroke="#46679a" stroke-width="2.6" stroke-linecap="round"/><circle cx="12" cy="8" r="5.6" fill="none" stroke="#46679a" stroke-width="1.4"/></svg>
<div class="t" style="left:1233.0px;top:252.8px;font-size:12.5px;color:#8a8a8a">&lt;all&gt;</div>
<svg class="a" style="left:1327px;top:248px" width="19" height="19" viewBox="0 0 19 19"><path d="M8.3 11.7 L2 18" stroke="#46679a" stroke-width="2.6" stroke-linecap="round"/><circle cx="12" cy="8" r="5.6" fill="none" stroke="#46679a" stroke-width="1.4"/></svg>
<div class="t" style="left:1379.0px;top:252.8px;font-size:12.5px;color:#8a8a8a">&lt;all&gt;</div>
<svg class="a" style="left:1454px;top:248px" width="19" height="19" viewBox="0 0 19 19"><path d="M8.3 11.7 L2 18" stroke="#46679a" stroke-width="2.6" stroke-linecap="round"/><circle cx="12" cy="8" r="5.6" fill="none" stroke="#46679a" stroke-width="1.4"/></svg>
<div class="a" style="left:384px;top:273px;width:1093px;height:21px;background:#e5e5e5"></div>
<div class="a" style="left:407px;top:273px;width:2px;height:21px;background:#fff"></div>
<div class="a" style="left:432px;top:273px;width:2px;height:21px;background:#fff"></div>
<div class="a" style="left:457px;top:273px;width:2px;height:21px;background:#fff"></div>
<div class="a" style="left:482px;top:273px;width:2px;height:21px;background:#fff"></div>
<div class="a" style="left:606px;top:273px;width:2px;height:21px;background:#fff"></div>
<div class="a" style="left:730px;top:273px;width:2px;height:21px;background:#fff"></div>
<div class="a" style="left:854px;top:273px;width:2px;height:21px;background:#fff"></div>
<div class="a" style="left:978px;top:273px;width:2px;height:21px;background:#fff"></div>
<div class="a" style="left:1102px;top:273px;width:2px;height:21px;background:#fff"></div>
<div class="a" style="left:1226px;top:273px;width:2px;height:21px;background:#fff"></div>
<div class="a" style="left:1350px;top:273px;width:2px;height:21px;background:#fff"></div>
<div class="a" style="left:1372px;top:273px;width:2px;height:21px;background:#fff"></div>
<div class="a" style="left:389px;top:272.5px;line-height:0"><svg width="18" height="19" viewBox="0 0 18 19"><path d="M1 6.5 L3.8 5.6 L4.6 6.2 V2.6 L7.6 1.3 L11.5 2.6 V12 L16.8 10.3 V14.6 L11.5 18.3 L1 11.8 Z" fill="#f5cf1c" stroke="#a8860c" stroke-width="0.7" stroke-linejoin="round"/><path d="M1 6.5 L3.8 5.6 L4.6 6.2 L4.6 10 L1 11.8 Z" fill="#ffe04a"/><path d="M11.5 12 L16.8 10.3 V14.6 L11.5 18.3 Z" fill="#ffe35a" stroke="#a8860c" stroke-width="0.6"/><path d="M4.6 2.6 L7.6 1.3 L11.2 2.4 L8.2 3.6 Z" fill="#fff2a6"/><path d="M7.8 3.6 L12 2.1 L16.8 3.6 L12.6 5.2 Z" fill="#c4e8fb" stroke="#2f6ea8" stroke-width="0.6"/><path d="M7.8 3.6 L12.6 5.2 V13 L7.8 11.4 Z" fill="#86c4ec" stroke="#2f6ea8" stroke-width="0.6"/><path d="M12.6 5.2 L16.8 3.6 V11.2 L12.6 13 Z" fill="#62aadf" stroke="#2f6ea8" stroke-width="0.6"/></svg></div>
<svg class="a" style="left:419px;top:276px" width="9" height="14" viewBox="0 0 9 14"><path d="M0.5 0.5 L8.5 7 L0.5 13.5 Z" fill="#f1dc62" stroke="#e6cf52" stroke-width="0.6"/></svg>
<div class="a" style="left:389px;top:294.5px;line-height:0"><svg width="18" height="19" viewBox="0 0 18 19"><path d="M1 6.5 L3.8 5.6 L4.6 6.2 V2.6 L7.6 1.3 L11.5 2.6 V12 L16.8 10.3 V14.6 L11.5 18.3 L1 11.8 Z" fill="#f5cf1c" stroke="#a8860c" stroke-width="0.7" stroke-linejoin="round"/><path d="M1 6.5 L3.8 5.6 L4.6 6.2 L4.6 10 L1 11.8 Z" fill="#ffe04a"/><path d="M11.5 12 L16.8 10.3 V14.6 L11.5 18.3 Z" fill="#ffe35a" stroke="#a8860c" stroke-width="0.6"/><path d="M4.6 2.6 L7.6 1.3 L11.2 2.4 L8.2 3.6 Z" fill="#fff2a6"/><path d="M7.8 3.6 L12 2.1 L16.8 3.6 L12.6 5.2 Z" fill="#c4e8fb" stroke="#2f6ea8" stroke-width="0.6"/><path d="M7.8 3.6 L12.6 5.2 V13 L7.8 11.4 Z" fill="#86c4ec" stroke="#2f6ea8" stroke-width="0.6"/><path d="M12.6 5.2 L16.8 3.6 V11.2 L12.6 13 Z" fill="#62aadf" stroke="#2f6ea8" stroke-width="0.6"/></svg></div>
<svg class="a" style="left:419px;top:298px" width="9" height="14" viewBox="0 0 9 14"><path d="M0.5 0.5 L8.5 7 L0.5 13.5 Z" fill="#f1dc62" stroke="#e6cf52" stroke-width="0.6"/></svg>
<svg class="a" style="left:439px;top:297px" width="17" height="15" viewBox="0 0 17 15"><rect x="0.5" y="0.5" width="12" height="10" fill="#c00000" stroke="#700000" stroke-width="0.8"/><rect x="3.5" y="3.5" width="13" height="11" fill="#e00000" stroke="#800000" stroke-width="0.8"/><path d="M8 9 H12 M10 7 V11" stroke="#300" stroke-width="0.8"/></svg>
<div class="g" style="left:488.5px;top:276.7px;letter-spacing:-0.23px">201401-B01-001</div>
<div class="g" style="left:612.5px;top:276.7px;letter-spacing:0.8px">Test</div>
<div class="g" style="left:860.5px;top:276.7px;letter-spacing:0.55px">Baugruppe</div>
<div class="g" style="left:984.5px;top:276.7px;letter-spacing:0.55px">Abgelegt</div>
<div class="g" style="left:1108.5px;top:276.7px;letter-spacing:-0.37px">18.12.2015 16:13:06</div>
<div class="g" style="left:1232.5px;top:276.7px;letter-spacing:0px">mac</div>
<div class="g" style="left:488.5px;top:298.7px;letter-spacing:-0.19px">BS01828</div>
<div class="g" style="left:612.5px;top:298.7px;letter-spacing:-0.19px">BS01828</div>
<div class="g" style="left:736.5px;top:298.7px;letter-spacing:0.8px">Test</div>
<div class="g" style="left:860.5px;top:298.7px;letter-spacing:0.55px">Baugruppe</div>
<div class="g" style="left:984.5px;top:298.7px;letter-spacing:0.55px">Abgelegt</div>
<div class="g" style="left:1108.5px;top:298.7px;letter-spacing:-0.37px">08.07.2015 07:24:49</div>
<div class="g" style="left:1232.5px;top:298.7px;letter-spacing:0px">mac</div><div class="a" style="left:382px;top:525px;width:1096px;height:2px;background:#f5f5f5"></div>
<div class="a" style="left:382px;top:527px;width:1096px;height:4px;background:#cdcdcd"></div>
<div class="ph" style="left:381px;top:531px;width:1097px;height:42px"></div>
<div class="pht" style="left:385px;top:542.2px;letter-spacing:-0.15px">Versionen</div>
<div class="dd" style="left:1414px;top:549px;border-left-width:5.5px;border-right-width:5.5px;border-top-width:6.5px;border-top-color:#777"></div><svg class="a" style="left:1437px;top:546px" width="10" height="12" viewBox="0 0 10 12"><path d="M2.5 0.5 H7.5 V6.2 M4.75 7 V11" fill="none" stroke="#7a7a7a" stroke-width="1.1"/><rect x="2" y="0" width="2" height="6.5" fill="#7a7a7a"/><rect x="0.5" y="6" width="9" height="1.3" fill="#7a7a7a"/></svg><svg class="a" style="left:1460.5px;top:546.5px" width="10" height="10" viewBox="0 0 10 10"><path d="M0.7 0.7 L9.3 9.3 M9.3 0.7 L0.7 9.3" stroke="#777" stroke-width="1.5"/></svg>
<div class="a" style="left:381px;top:573px;width:1097px;height:1px;background:#b4b4b4"></div>
<div class="a" style="left:381px;top:574px;width:1097px;height:25px;background:#f0f0f0;border-bottom:1px solid #a9a9a9"></div>
<div class="a" style="left:538px;top:578px;width:1px;height:16px;background:#d6d6d6"></div>
<div class="a" style="left:794px;top:578px;width:1px;height:16px;background:#d6d6d6"></div>
<div class="a" style="left:964px;top:578px;width:1px;height:16px;background:#d6d6d6"></div>
<div class="a" style="left:1134px;top:578px;width:1px;height:16px;background:#d6d6d6"></div>
<div class="a" style="left:1304px;top:578px;width:1px;height:16px;background:#d6d6d6"></div>
<div class="a" style="left:1477px;top:578px;width:1px;height:16px;background:#d6d6d6"></div>
<div class="t" style="left:410.5px;top:580.6px;font-size:12.8px;color:#1a1a1a">Version</div>
<div class="t" style="left:546.5px;top:580.6px;font-size:12.8px;color:#1a1a1a">Status</div>
<div class="t" style="left:802.5px;top:580.6px;font-size:12.8px;color:#1a1a1a">Bearbeiter</div>
<div class="t" style="left:971.5px;top:580.6px;font-size:12.8px;color:#1a1a1a">Datum</div>
<div class="t" style="left:1142.5px;top:580.6px;font-size:12.8px;color:#1a1a1a">Kommentar</div>
<div class="t" style="left:1311.5px;top:580.6px;font-size:12.8px;color:#1a1a1a">Dokument-ID.</div>
<div class="a" style="left:381px;top:599px;width:1097px;height:237px;background:#fff"></div>
<div class="a" style="left:404px;top:621px;width:1073px;height:1px;background:#ececec"></div>
<div class="a" style="left:426px;top:643px;width:1051px;height:1px;background:#ececec"></div>
<div class="a" style="left:426px;top:665px;width:1051px;height:1px;background:#ececec"></div>
<div class="a" style="left:539px;top:599px;width:1px;height:66px;background:#ececec"></div>
<div class="a" style="left:795px;top:599px;width:1px;height:66px;background:#ececec"></div>
<div class="a" style="left:965px;top:599px;width:1px;height:66px;background:#ececec"></div>
<div class="a" style="left:1135px;top:599px;width:1px;height:66px;background:#ececec"></div>
<div class="a" style="left:1305px;top:599px;width:1px;height:66px;background:#ececec"></div>
<svg class="a" style="left:388px;top:606px" width="8" height="8" viewBox="0 0 8 8"><path d="M7.5 0.5 V7.5 H0.5 Z" fill="#5a5a5a"/></svg>
<div class="a" style="left:409px;top:600.5px;line-height:0"><svg width="16.5" height="17.4" viewBox="0 0 18 19"><path d="M1 6.5 L3.8 5.6 L4.6 6.2 V2.6 L7.6 1.3 L11.5 2.6 V12 L16.8 10.3 V14.6 L11.5 18.3 L1 11.8 Z" fill="#f5cf1c" stroke="#a8860c" stroke-width="0.7" stroke-linejoin="round"/><path d="M1 6.5 L3.8 5.6 L4.6 6.2 L4.6 10 L1 11.8 Z" fill="#ffe04a"/><path d="M11.5 12 L16.8 10.3 V14.6 L11.5 18.3 Z" fill="#ffe35a" stroke="#a8860c" stroke-width="0.6"/><path d="M4.6 2.6 L7.6 1.3 L11.2 2.4 L8.2 3.6 Z" fill="#fff2a6"/><path d="M7.8 3.6 L12 2.1 L16.8 3.6 L12.6 5.2 Z" fill="#c4e8fb" stroke="#2f6ea8" stroke-width="0.6"/><path d="M7.8 3.6 L12.6 5.2 V13 L7.8 11.4 Z" fill="#86c4ec" stroke="#2f6ea8" stroke-width="0.6"/><path d="M12.6 5.2 L16.8 3.6 V11.2 L12.6 13 Z" fill="#62aadf" stroke="#2f6ea8" stroke-width="0.6"/></svg></div>
<div class="g" style="left:431px;top:604.1px">0</div>
<div class="g" style="left:544px;top:604.1px;letter-spacing:0px">Erstellt</div>
<div class="g" style="left:800.5px;top:604.1px;letter-spacing:0px">mac</div>
<div class="g" style="left:969.5px;top:604.1px;letter-spacing:-0.37px">08.07.2015 07:24:24</div>
<div class="g" style="left:1309.5px;top:604.1px;letter-spacing:-0.29px">$:201401-B01-001</div>
<div class="a" style="left:431px;top:622.5px;line-height:0"><svg width="16.5" height="17.4" viewBox="0 0 18 19"><path d="M1 6.5 L3.8 5.6 L4.6 6.2 V2.6 L7.6 1.3 L11.5 2.6 V12 L16.8 10.3 V14.6 L11.5 18.3 L1 11.8 Z" fill="#f5cf1c" stroke="#a8860c" stroke-width="0.7" stroke-linejoin="round"/><path d="M1 6.5 L3.8 5.6 L4.6 6.2 L4.6 10 L1 11.8 Z" fill="#ffe04a"/><path d="M11.5 12 L16.8 10.3 V14.6 L11.5 18.3 Z" fill="#ffe35a" stroke="#a8860c" stroke-width="0.6"/><path d="M4.6 2.6 L7.6 1.3 L11.2 2.4 L8.2 3.6 Z" fill="#fff2a6"/><path d="M7.8 3.6 L12 2.1 L16.8 3.6 L12.6 5.2 Z" fill="#c4e8fb" stroke="#2f6ea8" stroke-width="0.6"/><path d="M7.8 3.6 L12.6 5.2 V13 L7.8 11.4 Z" fill="#86c4ec" stroke="#2f6ea8" stroke-width="0.6"/><path d="M12.6 5.2 L16.8 3.6 V11.2 L12.6 13 Z" fill="#62aadf" stroke="#2f6ea8" stroke-width="0.6"/></svg></div>
<div class="g" style="left:453px;top:626.1px">0.1</div>
<div class="g" style="left:544px;top:626.1px;letter-spacing:0.55px">Abgelegt</div>
<div class="g" style="left:800.5px;top:626.1px;letter-spacing:0px">mac</div>
<div class="g" style="left:969.5px;top:626.1px;letter-spacing:-0.37px">08.07.2015 07:24:28</div>
<div class="g" style="left:1309.5px;top:626.1px;letter-spacing:-0.29px">$:201401-B01-001:1</div>
<div class="a" style="left:431px;top:644.5px;line-height:0"><svg width="16.5" height="17.4" viewBox="0 0 18 19"><path d="M1 6.5 L3.8 5.6 L4.6 6.2 V2.6 L7.6 1.3 L11.5 2.6 V12 L16.8 10.3 V14.6 L11.5 18.3 L1 11.8 Z" fill="#f5cf1c" stroke="#a8860c" stroke-width="0.7" stroke-linejoin="round"/><path d="M1 6.5 L3.8 5.6 L4.6 6.2 L4.6 10 L1 11.8 Z" fill="#ffe04a"/><path d="M11.5 12 L16.8 10.3 V14.6 L11.5 18.3 Z" fill="#ffe35a" stroke="#a8860c" stroke-width="0.6"/><path d="M4.6 2.6 L7.6 1.3 L11.2 2.4 L8.2 3.6 Z" fill="#fff2a6"/><path d="M7.8 3.6 L12 2.1 L16.8 3.6 L12.6 5.2 Z" fill="#c4e8fb" stroke="#2f6ea8" stroke-width="0.6"/><path d="M7.8 3.6 L12.6 5.2 V13 L7.8 11.4 Z" fill="#86c4ec" stroke="#2f6ea8" stroke-width="0.6"/><path d="M12.6 5.2 L16.8 3.6 V11.2 L12.6 13 Z" fill="#62aadf" stroke="#2f6ea8" stroke-width="0.6"/></svg></div>
<div class="g" style="left:453px;top:648.1px">0.2</div>
<div class="g" style="left:544px;top:648.1px;letter-spacing:0.55px">Abgelegt</div>
<div class="g" style="left:800.5px;top:648.1px;letter-spacing:0px">mac</div>
<div class="g" style="left:969.5px;top:648.1px;letter-spacing:-0.37px">18.12.2015 16:13:06</div>
<div class="g" style="left:1309.5px;top:648.1px;letter-spacing:-0.29px">$:201401-B01-001:2</div><div class="a" style="left:379px;top:836px;width:1099px;height:28px;background:#e8e8e8;border-top:1px solid #c9c9c9;border-bottom:1px solid #cfcfcf"></div>
<div class="a" style="left:379px;top:836px;width:1px;height:27px;background:#c8c8c8"></div>
<div class="a" style="left:501px;top:836px;width:96px;height:26px;background:#fff;border:1px solid #c6c6c6;border-top:none"></div>
<div class="a" style="left:386px;top:840px;line-height:0"><svg width="16" height="16" viewBox="0 0 16 16"><rect x="0.5" y="0.5" width="13" height="13" fill="#fff" stroke="#a9b6c6" stroke-width="0.9"/><rect x="0.5" y="0.5" width="13" height="2.5" fill="#a9b6c6"/><path d="M2.5 5.5 H9 M2.5 8 H8 M2.5 10.5 H7" stroke="#b9c6d6" stroke-width="0.9"/><path d="M8 9 H15 V13 H11 L9 15 V13 H8 Z" fill="#d5e8fa" stroke="#8fb3dc" stroke-width="0.8"/></svg></div>
<div class="t" style="left:409px;top:842.8px;font-size:13.5px;color:#3a3a3a">Eigenschaften</div>
<div class="a" style="left:506px;top:840px;line-height:0"><svg width="16" height="14" viewBox="0 0 16 14"><g fill="#a8bfdc"><rect x="0" y="1" width="2" height="1.6"/><rect x="0" y="5" width="2" height="1.6"/><rect x="0" y="9" width="2" height="1.6"/></g><path d="M4 1.8 H15 M4 3.8 H12 M4 5.8 H15 M4 7.8 H12 M4 9.8 H15 M4 11.8 H12" stroke="#b6c8e0" stroke-width="0.9"/></svg></div>
<div class="t" style="left:529.5px;top:842.8px;font-size:13.5px;color:#3a3a3a">Versionen</div>
<div class="a" style="left:605px;top:840px;line-height:0"><svg width="13" height="16" viewBox="0 0 13 16"><path d="M0.5 0.5 H8 L12.5 5 V15.5 H0.5 Z" fill="#fff" stroke="#b8c2cc" stroke-width="0.9"/><path d="M8 0.5 V5 H12.5" fill="none" stroke="#b8c2cc" stroke-width="0.9"/></svg></div>
<div class="t" style="left:626.5px;top:842.8px;font-size:13.5px;color:#3a3a3a">Dateien</div>
<div class="a" style="left:687px;top:840px;line-height:0"><svg width="15" height="16" viewBox="0 0 15 16"><circle cx="2.5" cy="2.5" r="1.8" fill="#b01a2a"/><path d="M2.5 4.5 V8.5 Q2.5 11 5 11 H9 Q12 11 12.5 13" fill="none" stroke="#8eb0da" stroke-width="0.9" stroke-dasharray="1.2 1"/><circle cx="2.5" cy="13" r="1.6" fill="#8eb0da"/><circle cx="12.5" cy="13.5" r="1.6" fill="#8eb0da"/></svg></div>
<div class="t" style="left:709px;top:842.8px;font-size:13.5px;color:#3a3a3a">Relationen</div>
<div class="a" style="left:786px;top:840px;line-height:0"><svg width="16" height="16" viewBox="0 0 16 16"><circle cx="2" cy="2" r="1.6" fill="#8eb0da"/><circle cx="13" cy="2" r="1.6" fill="#8eb0da"/><path d="M2 3.5 Q3 7 7 7 H10 Q13 7 13 3.5 M10 7 Q12 9 12 11" fill="none" stroke="#8eb0da" stroke-width="0.9" stroke-dasharray="1.2 1"/><circle cx="12" cy="13" r="1.8" fill="#b01a2a"/></svg></div>
<div class="t" style="left:809.5px;top:842.8px;font-size:13.5px;color:#3a3a3a">Teileverwendung</div>
<div class="a" style="left:926px;top:840px;line-height:0"><svg width="15" height="15" viewBox="0 0 15 15"><circle cx="3.5" cy="3.5" r="3" fill="#ee8b8b"/><circle cx="11" cy="3.5" r="3" fill="#f3dd7e"/><circle cx="3.5" cy="11" r="3" fill="#7fa8e8"/><circle cx="11" cy="11" r="3" fill="#93cc96"/></svg></div>
<div class="t" style="left:948px;top:842.8px;font-size:13.5px;color:#3a3a3a">Varianten</div>
<div class="a" style="left:1020px;top:840px;line-height:0"><svg width="16" height="16" viewBox="0 0 16 16"><path d="M10 4 L4.5 10.5 A1.6 1.6 0 0 0 7 12.5 L13 5.5 A3 3 0 0 0 8.5 1.5 L2.5 8.5 A4.3 4.3 0 0 0 9 14" fill="none" stroke="#a6adb6" stroke-width="1.2"/></svg></div>
<div class="t" style="left:1043px;top:842.8px;font-size:13.5px;color:#3a3a3a">Anhangdokumente</div>
<div class="a" style="left:1175px;top:840px;line-height:0"><svg width="15" height="15" viewBox="0 0 15 15"><path d="M0.5 0.5 H14.5 V10 L10 14.5 H0.5 Z" fill="#f8c08a" stroke="#e39a5a" stroke-width="0.9"/><path d="M14.5 10 H10 V14.5" fill="#eba36a" stroke="#e39a5a" stroke-width="0.9"/><path d="M2.5 3.5 H12 M2.5 6 H12" stroke="#e39a5a" stroke-width="0.7"/></svg></div>
<div class="t" style="left:1197px;top:842.8px;font-size:13.5px;color:#3a3a3a">Notizen</div>
<div class="a" style="left:1477px;top:193px;width:1px;height:670px;background:#fbfbfb"></div>
<div class="a" style="left:1478px;top:193px;width:37px;height:670px;background:#e8e8e8"></div>
<div class="a" style="left:1508px;top:200px;width:5px;height:108px;background:#d7d7d7"></div>
<div class="a" style="left:1508px;top:330px;width:5px;height:80px;background:#d7d7d7"></div>
<div class="a" style="left:1508px;top:428px;width:5px;height:100px;background:#d7d7d7"></div>
<svg class="a" style="left:1483px;top:200px" width="20" height="19" viewBox="0 0 20 19"><path d="M1 7 H6 V10 H14 V7 H19 V17 H1 Z" fill="#bfe0f8" stroke="#9cc8ea" stroke-width="0.8"/><path d="M2.5 2 H17.5 L19 7 H14 V10 H6 V7 H1 Z" fill="#a9d3f3" stroke="#9cc8ea" stroke-width="0.6"/><path d="M10 1 V10 M7 4 L10 1 L13 4" fill="none" stroke="#3d73bd" stroke-width="1.8"/><rect x="1" y="17" width="18" height="1.5" fill="#cdd6e0"/></svg>
<svg class="a" style="left:1483px;top:329px" width="20" height="17" viewBox="0 0 20 17"><rect x="0.5" y="0.5" width="19" height="16" fill="#cfe7fa" stroke="#b9d6ee" stroke-width="0.9"/><rect x="2" y="3" width="16" height="1.4" fill="#c7a9d9"/><rect x="2" y="5.5" width="7.3" height="9" fill="#a8d5a6"/><rect x="10.7" y="5.5" width="7.3" height="9" fill="#a8d5a6"/></svg>
<svg class="a" style="left:1483px;top:429px" width="19" height="15" viewBox="0 0 19 15"><rect x="0.5" y="0.5" width="18" height="14" fill="#e4dbf4" stroke="#c0b0dc" stroke-width="0.9"/><path d="M0.5 0.5 L9.5 8 L18.5 0.5" fill="none" stroke="#c0b0dc" stroke-width="0.9"/></svg>
<div class="t" style="left:1485px;top:221.5px;font-size:14.7px;color:#3a3a3a;transform-origin:0 0;transform:translate(14px,0) rotate(90deg)">Postausgang</div>
<div class="t" style="left:1485px;top:348.5px;font-size:14.7px;color:#3a3a3a;transform-origin:0 0;transform:translate(14px,0) rotate(90deg)">Vorlagen</div>
<div class="t" style="left:1485px;top:448.5px;font-size:14.7px;color:#3a3a3a;transform-origin:0 0;transform:translate(14px,0) rotate(90deg)">Nachrichten</div>
<div class="t" style="left:1022px;top:872.3px;font-size:13.8px;color:#3a3a3a">Objekte:</div>
<div class="a" style="left:1075px;top:866px;width:63px;height:25px;background:#e9e9e9;border:1px solid #b4b4b4"></div>
<div class="t" style="left:1078px;top:872.5px;font-size:13px;color:#a0a0a0">2</div>
<div class="t" style="left:1145px;top:872.3px;font-size:13.8px;color:#3a3a3a;letter-spacing:-0.35px">Seiten:</div>
<svg class="a" style="left:1196px;top:874px" width="11" height="10" viewBox="0 0 11 10"><rect x="0" y="0" width="2" height="10" fill="#b5c9e8"/><path d="M10 0 V10 L3 5 Z" fill="#b5c9e8"/></svg>
<svg class="a" style="left:1225px;top:874px" width="8" height="10" viewBox="0 0 8 10"><path d="M7 0 V10 L0 5 Z" fill="#b5c9e8"/></svg>
<div class="a" style="left:1243px;top:866px;width:38px;height:25px;background:#e9e9e9;border:1px solid #b4b4b4"></div>
<div class="a" style="left:1281px;top:866px;width:38px;height:25px;background:#e9e9e9;border:1px solid #b4b4b4"></div>
<div class="t" style="left:1246px;top:872.5px;font-size:13px;color:#a0a0a0">1</div>
<div class="t" style="left:1284px;top:872.5px;font-size:13px;color:#a0a0a0">1</div>
<svg class="a" style="left:1330px;top:874px" width="8" height="10" viewBox="0 0 8 10"><path d="M0 0 V10 L7 5 Z" fill="#b5c9e8"/></svg>
<svg class="a" style="left:1355px;top:874px" width="11" height="10" viewBox="0 0 11 10"><path d="M0 0 V10 L7 5 Z" fill="#b5c9e8"/><rect x="8.5" y="0" width="2" height="10" fill="#b5c9e8"/></svg>
<svg class="a" style="left:1382px;top:871px" width="15" height="15" viewBox="0 0 15 15"><path d="M7.5 0.8 L8.6 2.1 L10.3 1.6 L10.8 3.3 L12.5 3.8 L12.2 5.5 L13.6 6.6 L12.6 8 L13.4 9.6 L11.8 10.4 L11.6 12.1 L9.9 12.1 L9 13.6 L7.5 12.8 L6 13.6 L5.1 12.1 L3.4 12.1 L3.2 10.4 L1.6 9.6 L2.4 8 L1.4 6.6 L2.8 5.5 L2.5 3.8 L4.2 3.3 L4.7 1.6 L6.4 2.1 Z" fill="#fce79e" stroke="#eed68a" stroke-width="0.5"/></svg>
<svg class="a" style="left:1413px;top:868px" width="22" height="20" viewBox="0 0 22 20"><ellipse cx="9" cy="3.5" rx="6" ry="3" fill="#e8e8e8" stroke="#8a8a8a" stroke-width="0.8"/><path d="M3 4 V7 Q9 10 15 7 V4" fill="#b9b9b9" stroke="#6f6f6f" stroke-width="0.8"/><rect x="14" y="3.5" width="6" height="4" fill="#8f8f8f" stroke="#555" stroke-width="0.6"/><rect x="8" y="9" width="2" height="5" fill="#666"/><rect x="0.5" y="14" width="20" height="2.4" fill="#3d3d3d"/><rect x="0.5" y="13.6" width="20" height="0.8" fill="#cfe0f0"/><rect x="6" y="11" width="6" height="6" fill="#f3c94a" stroke="#a88420" stroke-width="0.8"/><rect x="7.3" y="12.3" width="3.4" height="2.6" fill="#fff6c8"/><rect x="7" y="17" width="4" height="2" fill="#666"/></svg>
<div class="t" style="left:1439px;top:871.8px;font-size:13.8px;color:#3a3a3a;letter-spacing:-0.45px">ONLINE</div>
<svg class="a" style="left:1497px;top:875px" width="13" height="12" viewBox="0 0 13 12"><g fill="#c2c2c2"><rect x="9.3" y="1.2" width="2.6" height="2.6"/><rect x="5.1" y="4.9" width="2.6" height="2.6"/><rect x="9.3" y="4.9" width="2.6" height="2.6"/><rect x="1" y="9.2" width="2.6" height="2.6"/><rect x="5.1" y="9.2" width="2.6" height="2.6"/><rect x="9.3" y="9.2" width="2.6" height="2.6"/></g></svg>
<div id="border"></div>
</body></html>
